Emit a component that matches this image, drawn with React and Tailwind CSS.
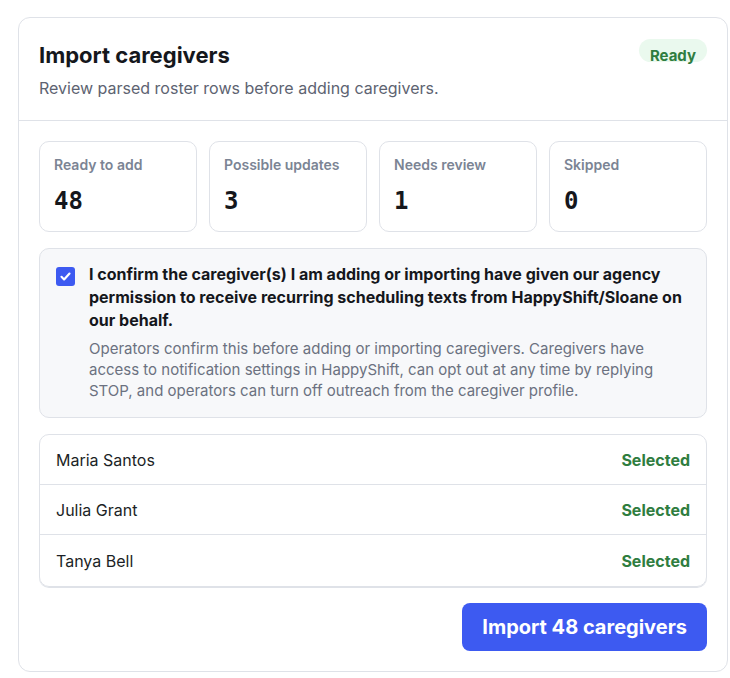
import React from "react";

const stats = [
  { label: "Ready to add", value: "48" },
  { label: "Possible updates", value: "3" },
  { label: "Needs review", value: "1" },
  { label: "Skipped", value: "0" },
];

const rows = ["Maria Santos", "Julia Grant", "Tanya Bell"];

const App = () => {
  return (
    <div className="bg-white pl-[18px] pt-[17px] pb-[6px] font-['Inter',sans-serif] text-[#15171c]">
      <div className="w-[710px] rounded-xl border border-[#dfe2e8] bg-white">
        <div className="flex items-start justify-between border-b border-[#dfe2e8] px-5 pt-[23px] pb-[21px]">
          <div>
            <h1 className="text-[22px] font-bold leading-[28px]">Import caregivers</h1>
            <p className="mt-[8px] text-[16px] leading-[22px] text-[#5d6371]">
              Review parsed roster rows before adding caregivers.
            </p>
          </div>
          <span className="-mt-[2px] inline-block h-[23px] rounded-full bg-[#eaf9ee] px-[11px] text-[15px] font-bold leading-[34px] text-[#2f7d3f]">
            Ready
          </span>
        </div>

        <div className="flex flex-col gap-4 px-5 pt-5 pb-5">
          <div className="grid grid-cols-4 gap-3">
            {stats.map((s) => (
              <div key={s.label} className="rounded-[10px] border border-[#dfe2e8] px-[14px] pt-[14px] pb-[16px]">
                <div className="text-[14px] font-semibold leading-[18px] text-[#7b8494]">{s.label}</div>
                <div className="mt-[14px] font-['DejaVu_Sans_Mono',monospace] text-[24px] font-bold leading-[27px]">
                  {s.value}
                </div>
              </div>
            ))}
          </div>

          <div className="flex gap-[14px] rounded-[10px] border border-[#dfe2e8] bg-[#f7f8fa] pt-[14px] pr-4 pb-4 pl-4">
            <div className="mt-[4px] flex h-[19px] w-[19px] shrink-0 items-center justify-center rounded-[3px] bg-[#3d5af1]">
              <svg width="13" height="13" viewBox="0 0 12 12" fill="none">
                <path d="M2.3 6.3l2.4 2.4 5-5.4" stroke="white" strokeWidth="2" strokeLinecap="round" strokeLinejoin="round" />
              </svg>
            </div>
            <div>
              <p className="text-[16px] font-bold leading-[23px] text-[#15171c]">
                I confirm the caregiver(s) I am adding or importing have given our agency permission to receive
                recurring scheduling texts from HappyShift/Sloane on our behalf.
              </p>
              <p className="mt-[6px] text-[15px] leading-[21px] text-[#6b7180]">
                Operators confirm this before adding or importing caregivers. Caregivers have access to notification
                settings in HappyShift, can opt out at any time by replying STOP, and operators can turn off outreach
                from the caregiver profile.
              </p>
            </div>
          </div>

          <div className="rounded-[10px] border border-[#dfe2e8] shadow-[0_1px_0_#dfe2e8]">
            {rows.map((name, i) => (
              <div
                key={name}
                className={
                  i < rows.length - 1
                    ? "flex h-[50px] items-center justify-between border-b border-[#dfe2e8] px-4"
                    : "flex h-[51px] items-center justify-between px-4"
                }
              >
                <span className="text-[16px] text-[#1c1f26]">{name}</span>
                <span className="text-[16px] font-bold text-[#2f7d3f]">Selected</span>
              </div>
            ))}
          </div>

          <div className="flex justify-end">
            <button className="h-[48px] rounded-lg bg-[#3d5af1] px-5 text-[20px] font-bold text-white">
              Import 48 caregivers
            </button>
          </div>
        </div>
      </div>
    </div>
  );
};

export default App;
